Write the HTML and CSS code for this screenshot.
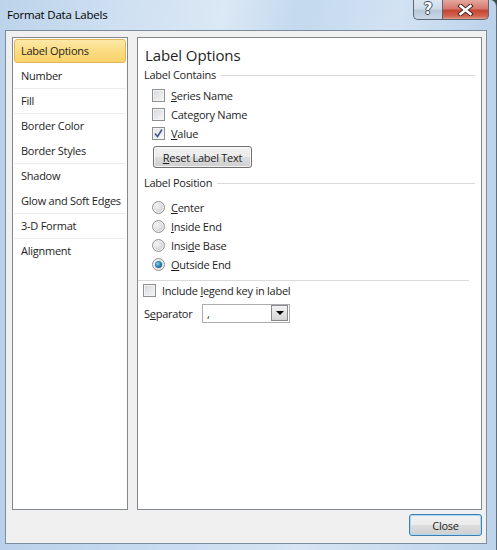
FILE: index.html
```html
<!DOCTYPE html>
<html>
<head>
<meta charset="utf-8">
<title>Format Data Labels</title>
<link rel="stylesheet" href="styles.css">
</head>
<body>
<div class="window">
  <div class="titlebar">
    <span class="title">Format Data Labels</span>
    <div class="caption-buttons">
      <div class="cap-btn help"><span class="help-glyph">?</span></div>
      <div class="cap-btn close">
        <svg width="17" height="12" viewBox="0 0 17 12">
          <path d="M3.5 2 L13.5 10 M13.5 2 L3.5 10" stroke="#4a2a28" stroke-width="4.4" stroke-linecap="square" fill="none"/>
          <path d="M3.5 2 L13.5 10 M13.5 2 L3.5 10" stroke="#ffffff" stroke-width="2.4" stroke-linecap="square" fill="none"/>
        </svg>
      </div>
    </div>
  </div>
  <div class="client">
    <div class="main">
      <ul class="nav">
        <li class="nav-item selected">Label Options</li>
        <li class="nav-item sep">Number</li>
        <li class="nav-item sep">Fill</li>
        <li class="nav-item">Border Color</li>
        <li class="nav-item sep">Border Styles</li>
        <li class="nav-item">Shadow</li>
        <li class="nav-item sep">Glow and Soft Edges</li>
        <li class="nav-item sep">3-D Format</li>
        <li class="nav-item">Alignment</li>
      </ul>
      <div class="panel">
        <h1 class="heading">Label Options</h1>
        <div class="group-title">Label Contains</div>
        <div class="options">
          <div class="option"><span class="checkbox"></span><span class="opt-text"><u>S</u>eries Name</span></div>
          <div class="option"><span class="checkbox"></span><span class="opt-text">Cate<u>g</u>ory Name</span></div>
          <div class="option"><span class="checkbox checked"><svg width="11" height="11" viewBox="0 0 11 11"><path d="M2 5.5 L4.5 8.5 L9 1.5" stroke="#4a5d92" stroke-width="1.7" fill="none"/></svg></span><span class="opt-text"><u>V</u>alue</span></div>
        </div>
        <div class="btn reset"><u>R</u>eset Label Text</div>
        <div class="group-title position">Label Position</div>
        <div class="options radios">
          <div class="option"><span class="radio"></span><span class="opt-text"><u>C</u>enter</span></div>
          <div class="option"><span class="radio"></span><span class="opt-text"><u>I</u>nside End</span></div>
          <div class="option"><span class="radio"></span><span class="opt-text">Insi<u>d</u>e Base</span></div>
          <div class="option"><span class="radio on"></span><span class="opt-text"><u>O</u>utside End</span></div>
        </div>
        <div class="divider"></div>
        <div class="option legend"><span class="checkbox"></span><span class="opt-text">Include <u>l</u>egend key in label</span></div>
        <div class="sep-row">
          <span class="sep-label">S<u>e</u>parator</span>
          <div class="combo"><span class="combo-value">,</span><span class="combo-arrow"></span></div>
        </div>
      </div>
    </div>
    <div class="footer"><div class="btn default">Close</div></div>
  </div>
</div>
</body>
</html>
```

FILE: styles.css
```css
* { box-sizing: border-box; }
html, body {
  margin: 0;
  padding: 0;
  background: #3d4a44;
}
body {
  font-family: "Open Sans", "Noto Sans", "DejaVu Sans", sans-serif;
  font-size: 11px;
  letter-spacing: -0.25px;
  color: #1e1e1e;
}
.window {
  width: 497px;
  height: 550px;
  display: flex;
  flex-direction: column;
  background: linear-gradient(90deg, #b9d1ea 0%, #c9dcf0 35%, #d6e4f3 60%, #bed4ea 100%);
  border-right: 1px solid #5e6f80;
  border-top-right-radius: 7px;
  overflow: hidden;
}
.titlebar {
  height: 30px;
  display: flex;
  align-items: flex-start;
  background: linear-gradient(100deg, #bcd3ea 0%, #cfe0f2 25%, #dbe8f5 45%, #c4d9ee 60%, #d2e2f3 80%, #bcd2ea 100%);
}
.title {
  font-size: 11.5px;
  letter-spacing: -0.2px;
  line-height: 16px;
  padding: 7px 0 0 7px;
  color: #000;
}
.caption-buttons {
  margin-left: auto;
  margin-right: 7px;
  display: flex;
  height: 20px;
}
.cap-btn {
  height: 20px;
  display: flex;
  align-items: center;
  justify-content: center;
  border: 1px solid #5a6878;
  border-top: none;
}
.help {
  width: 29px;
  border-right: none;
  border-bottom-left-radius: 5px;
  background: linear-gradient(#dbe6f1 0%, #cfdcea 45%, #b8c8da 55%, #c9d7e6 100%);
}
.help-glyph {
  font-family: "DejaVu Sans", sans-serif;
  font-weight: bold;
  font-size: 15px;
  letter-spacing: 0;
  line-height: 15px;
  color: #fff;
  text-shadow: 1px 0 0 #3c4c5e, -1px 0 0 #3c4c5e, 0 1px 0 #3c4c5e, 0 -1px 0 #3c4c5e;
}
.close {
  width: 47px;
  border-bottom-right-radius: 5px;
  background: linear-gradient(#e5a79f 0%, #d6786b 45%, #c44734 55%, #d1654f 85%, #e09a86 100%);
}
.client {
  flex: 1;
  margin: 0 9px 6px 5px;
  border: 1px solid #7e8d9c;
  background: #f0f0f0;
  padding: 6px 4px 7px 6px;
  display: flex;
  flex-direction: column;
}
.main {
  flex: 1;
  display: flex;
  gap: 9px;
}
.nav {
  list-style: none;
  margin: 0;
  width: 116px;
  padding: 1px 0 0 0;
  background: #fff;
  border: 1px solid #828790;
}
.nav-item {
  height: 25px;
  line-height: 24px;
  padding-left: 7px;
  margin: 0 1px;
  white-space: nowrap;
  border-bottom: 1px solid transparent;
}
.nav-item.sep {
  border-bottom-color: #ededed;
}
.nav-item.selected {
  height: 24px;
  margin-bottom: 1px;
  line-height: 22px;
  padding-left: 6px;
  border: 1px solid #e2b75a;
  border-radius: 3px;
  background: linear-gradient(#fde8a8 0%, #fbdc82 50%, #f9d36a 100%);
}
.panel {
  flex: 1;
  background: #fff;
  border: 1px solid #828790;
  padding: 0 6px 0 6px;
  display: flex;
  flex-direction: column;
}
.heading {
  margin: 7px 0 0 1px;
  font-size: 15px;
  letter-spacing: -0.1px;
  line-height: 20px;
  font-weight: normal;
}
.group-title {
  margin-top: 2px;
  height: 16px;
  line-height: 16px;
  display: flex;
  align-items: center;
  gap: 5px;
}
.group-title::after {
  content: "";
  flex: 1;
  border-top: 1px solid #dadada;
}
.group-title.position {
  margin-top: 7px;
}
.options {
  margin-top: 3px;
  padding-left: 8px;
  display: flex;
  flex-direction: column;
}
.options.radios {
  margin-top: 7px;
}
.option {
  height: 19px;
  display: flex;
  align-items: center;
  gap: 6px;
  white-space: nowrap;
}
.opt-text {
  line-height: 16px;
}
.checkbox {
  width: 13px;
  height: 13px;
  border: 1px solid #8e8f8f;
  background: linear-gradient(135deg, #d3d6da 0%, #e8e9eb 55%, #f7f7f7 100%);
  box-shadow: inset 0 0 0 1px #f4f4f4;
  display: flex;
  align-items: center;
  justify-content: center;
  flex-shrink: 0;
}
.checkbox.checked {
  background: linear-gradient(135deg, #e0e3e7 0%, #f0f1f2 60%, #fafafa 100%);
}
.radio {
  width: 13px;
  height: 13px;
  border-radius: 50%;
  border: 1px solid #929292;
  background: radial-gradient(circle at 35% 35%, #f4f4f4 0%, #d8d8d8 60%, #c9c9c9 100%);
  box-shadow: inset 0 0 0 1px #f2f2f2;
  display: flex;
  align-items: center;
  justify-content: center;
  flex-shrink: 0;
}
.radio.on::after {
  content: "";
  width: 7px;
  height: 7px;
  border-radius: 50%;
  background: radial-gradient(circle at 40% 40%, #8fd0f2 0%, #2a83b8 45%, #14456b 100%);
}
.btn {
  display: flex;
  align-items: center;
  justify-content: center;
  height: 22px;
  border: 1px solid #707070;
  border-radius: 3px;
  background: linear-gradient(#f2f2f2 0%, #ebebeb 48%, #dddddd 52%, #cfcfcf 100%);
  box-shadow: inset 0 0 0 1px rgba(255,255,255,0.7);
  white-space: nowrap;
}
.reset {
  margin: 3px 0 0 9px;
  width: 99px;
}
.divider {
  margin: 6px 6px 0 -6px;
  border-top: 1px solid #dadada;
}
.option.legend {
  margin-left: -1px;
}
.sep-row {
  margin-top: 3px;
  height: 20px;
  display: flex;
  align-items: center;
}
.sep-label {
  width: 58px;
}
.combo {
  width: 88px;
  height: 19px;
  border: 1px solid #abadb3;
  background: #fff;
  display: flex;
  align-items: center;
  padding: 1px;
}
.combo-value {
  flex: 1;
  padding-left: 3px;
  line-height: 15px;
}
.combo-arrow {
  width: 17px;
  height: 16px;
  border: 1px solid #8a8a8a;
  background: linear-gradient(#f4f4f4 0%, #e3e3e3 50%, #d3d3d3 100%);
  display: flex;
  align-items: center;
  justify-content: center;
}
.combo-arrow::after {
  content: "";
  border-left: 4px solid transparent;
  border-right: 4px solid transparent;
  border-top: 4px solid #000;
}
.footer {
  margin-top: 4px;
  display: flex;
  justify-content: flex-end;
}
.default {
  width: 73px;
  border-color: #3c7fb1;
  box-shadow: inset 0 0 0 1px #a8dcf5;
}
```
